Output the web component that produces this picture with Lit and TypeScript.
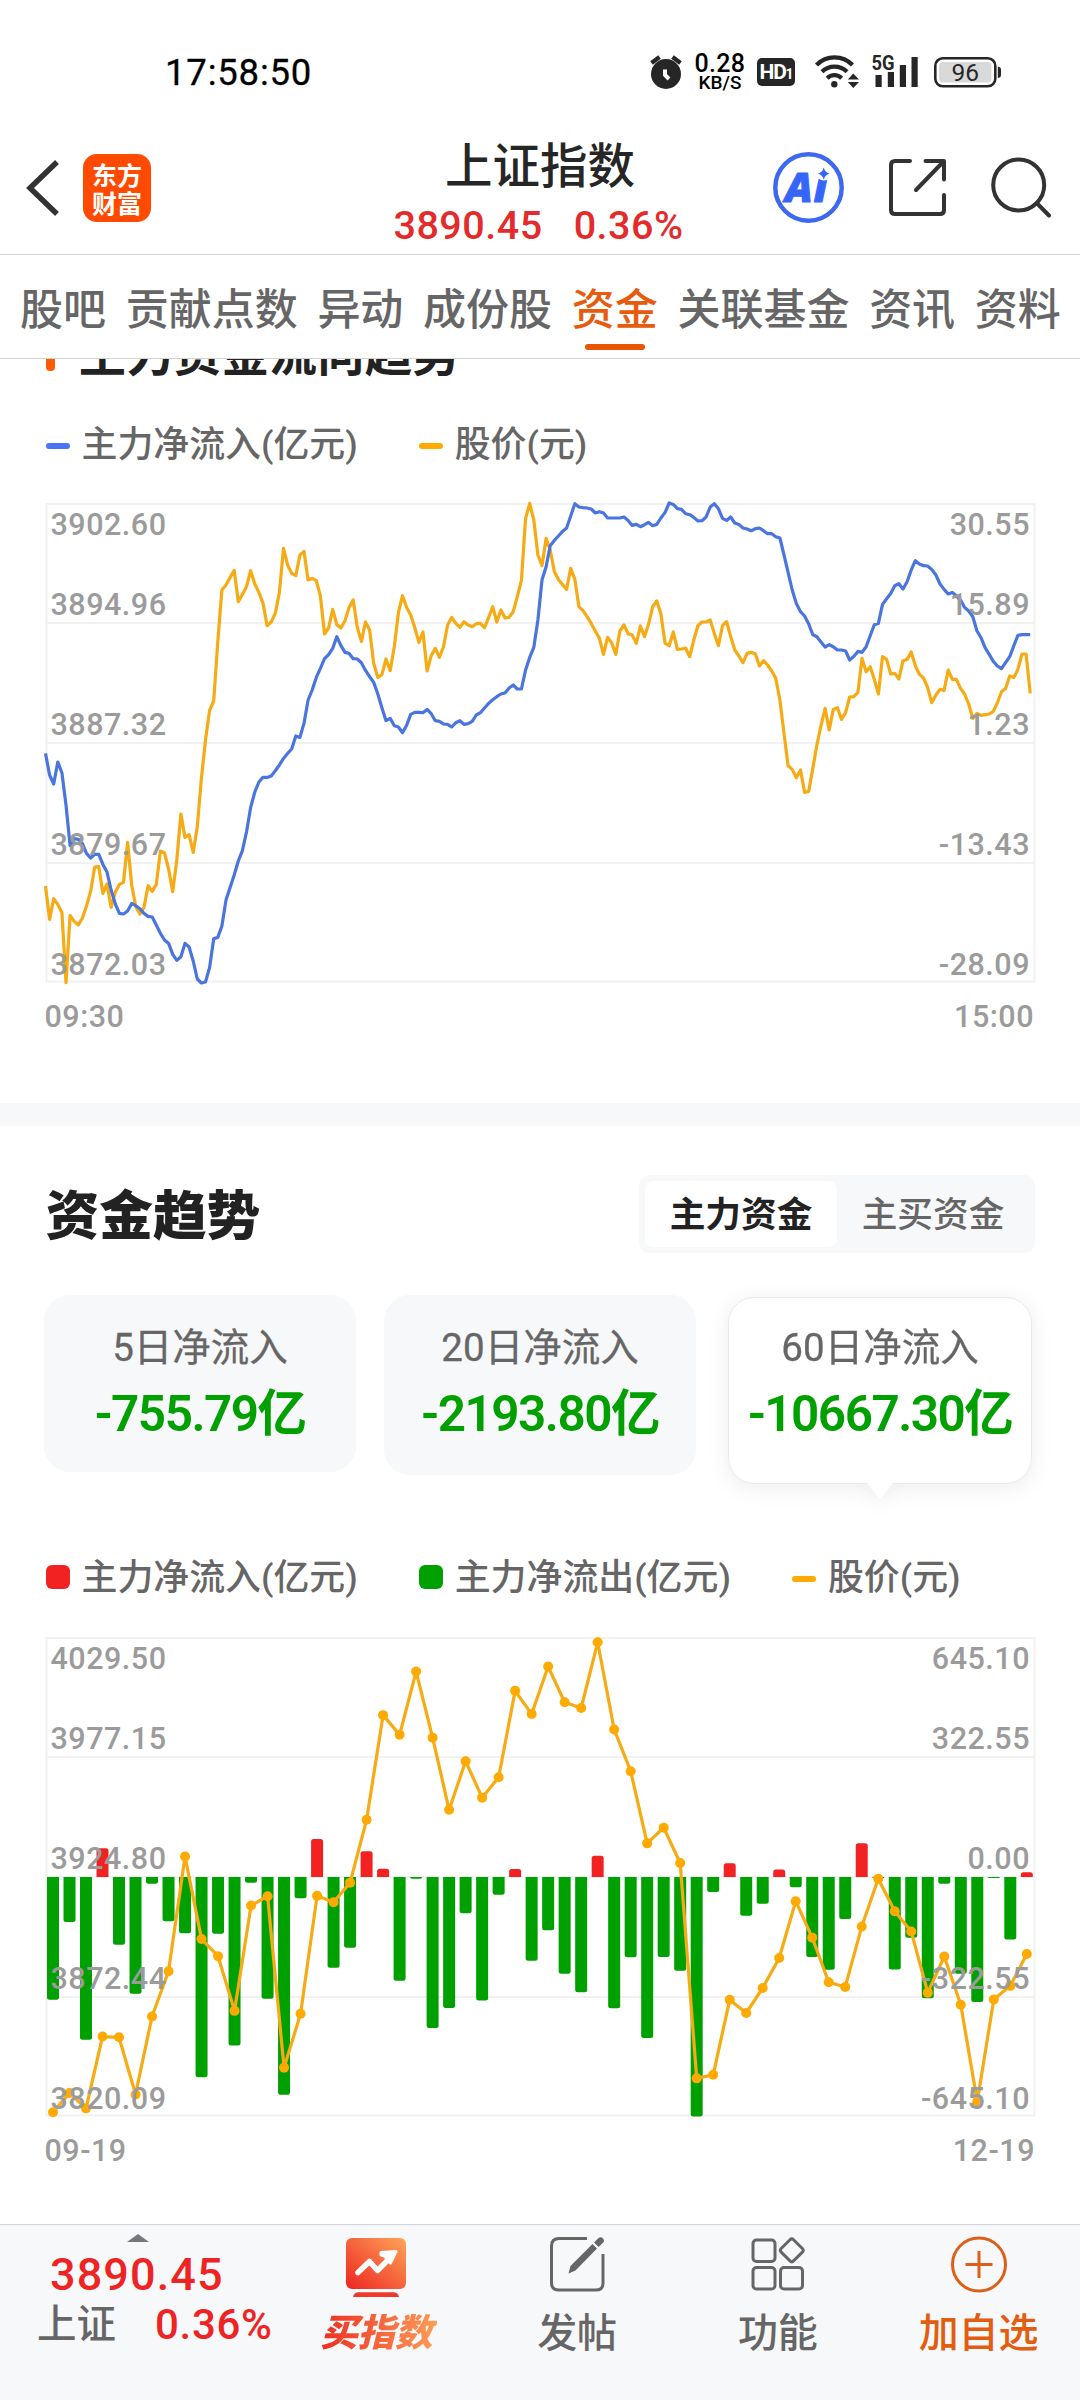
import { LitElement, html, svg, css } from "lit";
import { customElement, property } from "lit/decorators.js";
import { classMap } from "lit/directives/class-map.js";

/* One sample per trading minute, 09:30 to 15:00, in thirds of a pixel below the frame top. */
const PRICE = [
  1147, 1247, 1185, 1202, 1226, 1437, 1235, 1253, 1264, 1243, 1207, 1163, 1090, 1089, 1169, 1141, 1211, 1165, 1142, 1136,
  1016, 1144, 1209, 1231, 1211, 1146, 1163, 1142, 1042, 1048, 1096, 1164, 1069, 931, 1001, 993, 1046, 969, 824, 709,
  620, 592, 414, 259, 244, 221, 200, 294, 272, 249, 201, 241, 266, 299, 366, 355, 329, 266, 134, 184,
  209, 216, 154, 143, 229, 224, 231, 277, 391, 373, 317, 363, 373, 351, 311, 289, 371, 413, 355, 379,
  479, 521, 513, 466, 501, 429, 327, 276, 311, 334, 372, 416, 385, 502, 456, 434, 461, 429, 364, 341,
  359, 371, 354, 364, 369, 360, 359, 372, 342, 309, 355, 319, 343, 341, 324, 279, 231, 44, -1, 49,
  154, 186, 104, 139, 203, 227, 242, 257, 194, 226, 309, 321, 339, 359, 382, 404, 452, 401, 417, 452,
  382, 364, 390, 394, 419, 367, 399, 361, 309, 292, 331, 419, 426, 385, 437, 436, 433, 459, 409, 366,
  355, 355, 349, 389, 426, 366, 354, 399, 439, 457, 477, 449, 446, 450, 487, 471, 484, 502, 524, 589,
  689, 786, 797, 822, 799, 866, 863, 794, 724, 666, 614, 679, 617, 612, 647, 627, 580, 579, 566, 464,
  504, 489, 527, 571, 459, 467, 511, 509, 526, 471, 467, 445, 486, 512, 523, 551, 597, 574, 557, 560,
  499, 527, 527, 554, 571, 601, 644, 629, 635, 633, 631, 623, 597, 564, 554, 517, 521, 497, 451, 451, 569,
];
const INFLOW = [
  749, 814, 841, 775, 807, 904, 1026, 1005, 1007, 1020, 1049, 1063, 1052, 1052, 1082, 1105, 1159, 1201, 1229, 1231,
  1222, 1199, 1206, 1215, 1229, 1238, 1240, 1264, 1289, 1309, 1319, 1352, 1370, 1359, 1319, 1330, 1372, 1426, 1438, 1435,
  1391, 1305, 1301, 1267, 1189, 1151, 1114, 1072, 1041, 985, 912, 865, 835, 821, 821, 817, 801, 784, 764, 749,
  736, 697, 701, 659, 589, 559, 521, 494, 465, 453, 434, 399, 426, 446, 449, 465, 466, 477, 500, 519,
  536, 571, 612, 651, 644, 666, 670, 687, 665, 632, 626, 626, 627, 617, 630, 651, 653, 661, 662, 670,
  657, 651, 662, 660, 653, 634, 627, 613, 599, 588, 579, 571, 568, 553, 544, 556, 556, 499, 461, 431,
  349, 229, 189, 126, 110, 97, 83, 73, 37, 0, 10, 12, 13, 16, 28, 24, 28, 43, 43, 43,
  43, 40, 50, 65, 62, 69, 63, 56, 66, 62, 43, 26, -2, 2, 15, 17, 30, 33, 41, 52,
  51, 40, 10, 0, 15, 44, 50, 40, 58, 62, 73, 76, 81, 75, 73, 81, 90, 90, 99, 103,
  154, 206, 259, 299, 324, 337, 361, 393, 399, 415, 430, 423, 429, 439, 439, 442, 469, 458, 443, 446,
  429, 396, 363, 359, 302, 285, 269, 246, 240, 256, 234, 199, 171, 181, 186, 187, 197, 214, 241, 257,
  271, 266, 277, 289, 311, 322, 339, 381, 402, 432, 452, 473, 487, 495, 477, 459, 426, 395, 393, 393, 393,
];

/* Sixty trading days. Both series share one scale: 2.8 units to the pixel, frame top at 78, zero at 747. */
const DAY_PRICE = [
  1406, 1352, 1395, 1194, 1196, 1356, 1138, 1011, 690, 921, 969, 1122, 827, 801, 1281, 1130, 800, 818, 763, 587,
  294, 349, 172, 357, 559, 423, 525, 468, 226, 291, 158, 258, 274, 90, 334, 451, 653, 609, 708, 1311,
  1301, 1091, 1128, 1058, 974, 815, 917, 1042, 1055, 886, 752, 843, 900, 1071, 970, 1105, 1376, 1090, 1052, 963,
];
const DAY_FLOW = [
  1091, 873, 1203, 667, 937, 1074, 766, 871, 905, 1308, 906, 1219, 763, 1088, 1357, 807, 641, 1001, 945, 675,
  724, 1038, 752, 1170, 1114, 849, 1093, 797, 725, 982, 896, 1018, 1070, 688, 1115, 972, 1198, 971, 1010, 1418,
  789, 709, 856, 822, 726, 776, 971, 1007, 865, 653, 751, 1006, 917, 1087, 766, 1018, 1097, 750, 922, 734,
];

const FONT = css`
  :host {
    font-family: Roboto, "Noto Sans CJK SC", sans-serif;
  }
`;

const frame = (ys: number[]) => svg`
  <path class="grid" d="M0.500 1H988.500V478.5H0.500Z ${ys.map((y) => `M0.500 ${y}H988.500`).join(" ")}" />`;

const axis = (left: string[], right: string[], ys: number[]) => svg`
  ${left.map((t, i) => svg`<text class="axis" x="4.5" y=${ys[i]}>${t}</text>`)}
  ${right.map((t, i) => svg`<text class="axis end" x="984" y=${ys[i]}>${t}</text>`)}`;

const chartStyles = css`
  :host { display: block; }
  svg { display: block; width: 988px; height: 480px; overflow: visible; }
  .grid { fill: none; stroke: #f1f1f1; stroke-width: 2; }
  .line { fill: none; stroke-width: 3.2; stroke-linejoin: round; }
  .price { stroke: #f6aa14; }
  .flow { stroke: #4a75df; }
  .dot { fill: #ffaa00; }
  .up { fill: #f22222; }
  .down { fill: #00a000; }
  .axis { font-size: 30.5px; font-weight: 500; fill: #9b9b9b; letter-spacing: 0.5px; }
  .end { text-anchor: end; }
  .range {
    display: flex; justify-content: space-between; height: 40px; margin: 13.5px 0 0 -1px;
    font-size: 30.5px; font-weight: 500; line-height: 40px; letter-spacing: 0.5px; color: #9b9b9b;
  }
`;

@customElement("intraday-chart")
class IntradayChart extends LitElement {
  static styles = [FONT, chartStyles];

  private points(data: number[]) {
    return data.map((v, i) => `${(i * 4.103 - 0.5).toFixed(1)},${(v / 3 + 0.7).toFixed(1)}`).join(" ");
  }

  render() {
    return html`
      <svg viewBox="0 0 988 480">
        ${frame([120, 240, 360])}
        <polyline class="line price" points=${this.points(PRICE)} />
        <polyline class="line flow" points=${this.points(INFLOW)} />
        ${axis(
          ["3902.60", "3894.96", "3887.32", "3879.67", "3872.03"],
          ["30.55", "15.89", "1.23", "-13.43", "-28.09"],
          [32, 112, 232, 352, 472]
        )}
      </svg>
      <div class="range"><span>09:30</span><span>15:00</span></div>
    `;
  }
}

@customElement("daily-chart")
class DailyChart extends LitElement {
  static styles = [FONT, chartStyles];

  private y(v: number) {
    return (v - 78) / 2.8 + 1;
  }

  private bar(v: number, i: number) {
    const x = 7 + i * 16.505 - 6;
    const zero = this.y(747);
    const end = this.y(v);
    const r = Math.min(2.5, Math.abs(end - zero));
    const s = v > 747 ? -r : r;
    return svg`<path class=${v > 747 ? "down" : "up"}
      d="M${x} ${zero}V${end + s}Q${x} ${end} ${x + r} ${end}H${x + 12 - r}Q${x + 12} ${end} ${x + 12} ${end + s}V${zero}Z" />`;
  }

  render() {
    const pts = DAY_PRICE.map((v, i) => [7 + i * 16.505, this.y(v)]);
    return html`
      <svg viewBox="0 0 988 480">
        ${frame([120, 240, 360])}
        ${DAY_FLOW.map((v, i) => this.bar(v, i))}
        <polyline class="line price" points=${pts.map((p) => p.join(",")).join(" ")} />
        ${pts.map((p) => svg`<circle class="dot" cx=${p[0]} cy=${p[1]} r="5" />`)}
        ${axis(
          ["4029.50", "3977.15", "3924.80", "3872.44", "3820.09"],
          ["645.10", "322.55", "0.00", "-322.55", "-645.10"],
          [32, 112, 232, 352, 472]
        )}
      </svg>
      <div class="range"><span>09-19</span><span>12-19</span></div>
    `;
  }
}

@customElement("chart-legend")
class ChartLegend extends LitElement {
  @property({ attribute: false }) items: { kind: string; label: string }[] = [];

  static styles = [
    FONT,
    css`
      :host { display: flex; gap: 61px; height: 44px; }
      .item { display: flex; align-items: center; gap: 12px; font-size: 35.9px; line-height: 44px; color: #666; font-weight: 500; white-space: nowrap; }
      .mark { width: 24px; height: 6px; border-radius: 3px; margin-top: 1px; }
      .blue { background: #4a74f6; }
      .amber { background: #ffaa00; }
      .red, .green { height: 24px; border-radius: 6px; margin-top: -2px; }
      .red { background: #f22222; }
      .green { background: #00a000; }
    `,
  ];

  render() {
    return this.items.map(
      (it) => html`<div class="item"><span class="mark ${it.kind}"></span><span>${it.label}</span></div>`
    );
  }
}

@customElement("status-bar")
class StatusBar extends LitElement {
  static styles = [
    FONT,
    css`
      :host { display: flex; align-items: center; height: 110px; padding: 34px 79px 0 165px; box-sizing: border-box; }
      svg { display: block; fill: #262626; }
      .time { font-size: 36.5px; font-weight: 400; letter-spacing: 0.8px; color: #000; margin: 2px auto 0 0; line-height: 40px; -webkit-text-stroke: 0.3px #000; }
      .speed { display: flex; flex-direction: column; align-items: center; width: 52px; margin: 2px 11px 0 12px; color: #000; font-weight: 500; }
      .rate { font-size: 25px; line-height: 20px; letter-spacing: 0.3px; }
      .unit { font-size: 19px; line-height: 18px; }
      .hd { display: grid; place-items: center; width: 38px; height: 28px; border-radius: 5px; background: #262626; color: #fff; margin-right: 19px; }
      .hd span { font: 700 21px/28px Roboto, sans-serif; letter-spacing: -1.2px; }
      .hd small { font-size: 14px; }
      .signal { margin: 0 16px 0 12px; }
      .hand { fill: none; stroke: #fff; stroke-width: 4; }
      .stroke { fill: none; stroke: #262626; stroke-width: 4.2; }
      .level { fill: #d9d9d9; }
      .shell { fill: none; stroke: #262626; stroke-width: 2.6; }
      .net { font: 700 20px Roboto, sans-serif; }
      .pct { font: 400 24.5px Roboto, sans-serif; }
    `,
  ];

  render() {
    return html`
      <span class="time">17:58:50</span>
      <svg width="32" height="40" viewBox="0 0 32 40">
        <circle cx="16" cy="22" r="15" />
        <path class="stroke" d="M1.5 11 9.5 5M22.5 5 30.5 11" />
        <path class="hand" d="M15 17.5V23L19 27" />
      </svg>
      <div class="speed"><span class="rate">0.28</span><span class="unit">KB/S</span></div>
      <div class="hd"><span>HD<small>1</small></span></div>
      <svg width="45" height="40" viewBox="0 0 45 40">
        <path class="stroke" d="M2.5 13A25 25 0 0 1 38.5 13M8 19.8A17.5 17.5 0 0 1 33 19.8M13.2 26.2A10.2 10.2 0 0 1 27.6 26.2" />
        <circle cx="20.3" cy="32.2" r="3.2" />
        <path d="M39.3 21.5 45 27.5H33.8ZM39.3 36 33.8 30H45Z" />
      </svg>
      <svg class="signal" width="47" height="40" viewBox="0 0 47 40">
        <text class="net" x="0.5" y="18.3" textLength="23" lengthAdjust="spacingAndGlyphs">5G</text>
        <path d="M4.5 23h6.2v12h-6.2ZM16.8 20h6.2v15h-6.2ZM28.8 13h6.2v22h-6.2ZM40.5 5h6.2v30h-6.2Z" />
      </svg>
      <svg width="67" height="40" viewBox="0 0 67 40">
        <rect class="shell" x="1.3" y="6.3" width="60" height="28" rx="7.5" />
        <rect class="level" x="5" y="10" width="52.5" height="20.6" rx="4" />
        <path d="M63.8 14.5q3.2 .5 3.2 3v5.5q0 2.500-3.200 3Z" />
        <text class="pct" x="17.600" y="29.300">96</text>
      </svg>
    `;
  }
}

@customElement("index-header")
class IndexHeader extends LitElement {
  static styles = [
    FONT,
    css`
      :host { display: grid; grid-template-columns: 1fr auto 1fr; height: 145px; border-bottom: 1px solid #d4d4d4; box-sizing: border-box; }
      svg { display: block; fill: none; stroke: #333; stroke-width: 4; stroke-linecap: round; stroke-linejoin: round; }
      .left, .right { display: flex; align-items: center; padding-top: 11px; }
      .left { padding-left: 25px; gap: 22px; }
      .right { justify-content: flex-end; gap: 42.5px; padding-right: 29px; }
      .back { stroke-width: 5.5; stroke-linecap: butt; stroke-linejoin: miter; }
      .logo { display: flex; flex-direction: column; justify-content: center; width: 68px; height: 68px; border-radius: 14px; background: #ff4a00; color: #fff; font: 700 25px/28px "Noto Sans CJK SC", sans-serif; text-align: center; }
      .middle { display: flex; flex-direction: column; align-items: center; padding-top: 27px; }
      .title { font-size: 47.500px; line-height: 60px; font-weight: 500; color: #262626; }
      .quote { display: flex; gap: 31px; font-size: 39.500px; font-weight: 500; line-height: 50px; letter-spacing: 0.500px; color: #e32b2b; margin: 4px 3px 0 0; }
      .ring { stroke: #3d68f0; stroke-width: 4.500; }
      .ai { font: italic 900 41px "Noto Sans", sans-serif; fill: #3566fb; stroke: #3566fb; stroke-width: 1; }
      .mask { fill: #fff; stroke: none; }
      .spark { fill: #3566fb; stroke: none; }
    `,
  ];

  render() {
    return html`
      <div class="left">
        <svg class="back" width="36" height="56" viewBox="0 0 36 56"><path d="M32 2 5 28 32 54" /></svg>
        <div class="logo"><span>东方</span><span>财富</span></div>
      </div>
      <div class="middle">
        <div class="title">上证指数</div>
        <div class="quote"><span>3890.45</span><span>0.36%</span></div>
      </div>
      <div class="right">
        <svg width="71" height="71" viewBox="0 0 71 71">
          <circle class="ring" cx="35.5" cy="35.5" r="33.2" />
          <text class="ai" x="12" y="49.500" textLength="42">Ai</text>
          <circle class="mask" cx="51" cy="20.500" r="8" />
          <path class="spark" d="M50.700 15.500Q52 20.500 56.500 21.700 52 23 50.700 27.500 49.500 23 45 21.700 49.500 20.500 50.700 15.500Z" />
        </svg>
        <svg width="61" height="61" viewBox="0 0 61 61">
          <path d="M23 4H8Q4 4 4 8V53Q4 57 8 57H53Q57 57 57 53V38M38.500 4H57V22.500M56.500 4.500 29 33" />
        </svg>
        <svg width="61" height="61" viewBox="0 0 61 61">
          <circle cx="28.700" cy="28" r="25.500" /><path d="M46.700 46 59 58.500" />
        </svg>
      </div>
    `;
  }
}

@customElement("section-tabs")
class SectionTabs extends LitElement {
  static styles = [
    FONT,
    css`
      :host { display: flex; gap: 19.700px; height: 104px; padding: 0 20px; border-bottom: 1px solid #d4d4d4; box-sizing: border-box; }
      .tab { position: relative; font-size: 43px; line-height: 110px; height: 103px; color: #666; font-weight: 500; white-space: nowrap; }
      .on { color: #e85a0c; }
      .on::after { content: ""; position: absolute; left: 50%; bottom: 8px; width: 60px; height: 6px; margin-left: -30px; border-radius: 3px; background: #ea5504; }
    `,
  ];

  render() {
    return ["股吧", "贡献点数", "异动", "成份股", "资金", "关联基金", "资讯", "资料"].map(
      (t) => html`<span class=${classMap({ tab: true, on: t === "资金" })}>${t}</span>`
    );
  }
}

@customElement("action-bar")
class ActionBar extends LitElement {
  static styles = [
    FONT,
    css`
      :host { display: grid; grid-template-columns: 276px repeat(4, 1fr); height: 176px; background: #f7f8fa; border-top: 1px solid #cfd2d8; box-sizing: border-box; padding-right: 1px; }
      svg { display: block; fill: none; stroke: #666; stroke-width: 3; stroke-linejoin: round; }
      .quote { display: flex; flex-direction: column; color: #ee2424; }
      .caret { width: 0; border: 11px solid transparent; border-top: 0; border-bottom: 8px solid #77777c; margin: 9px 0 0 127px; }
      .last { font-size: 45px; font-weight: 500; line-height: 50px; letter-spacing: 1.100px; padding: 8px 0 0 50px; }
      .row { display: flex; gap: 39px; padding-left: 37px; font-size: 42px; font-weight: 500; line-height: 49px; letter-spacing: 0.700px; }
      .name { color: #666; font-size: 39.500px; font-weight: 500; letter-spacing: 0; }
      .action { display: flex; flex-direction: column; align-items: center; padding-top: 10px; font-size: 40px; font-weight: 500; line-height: 52px; color: #666; gap: 11px; white-space: nowrap; }
      .add { color: #e35d10; }
      .add svg { stroke: #dd5f18; }
      .buy { gap: 12px; }
      .buy span { font-size: 37.500px; font-weight: 900; font-style: italic; line-height: 48px; padding: 0 4px; background: linear-gradient(90deg, #ec2a22, #ff9c55); -webkit-background-clip: text; background-clip: text; color: transparent; }
      .nofill { stroke: none; }
      .trend { stroke: #fff; stroke-width: 5.500; stroke-linecap: round; }
      .head { fill: #fff; stroke: #fff; stroke-width: 3; }
      .pen { fill: #666; stroke: none; }
    `,
  ];

  render() {
    return html`
      <div class="quote">
        <i class="caret"></i>
        <span class="last">3890.45</span>
        <div class="row"><span class="name">上证</span><span>0.36%</span></div>
      </div>
      <div class="action buy">
        <svg width="62" height="62" viewBox="0 0 62 62">
          <defs><linearGradient id="g" x1="0" y1="1" x2="1" y2="0"><stop offset="0" stop-color="#ee2420" /><stop offset="1" stop-color="#ffa458" /></linearGradient></defs>
          <rect class="nofill" x="1" y="3" width="60" height="51" rx="6" fill="url(#g)" />
          <path class="nofill" d="M13 57.200H49Q54 58 54 63H8Q8 58 13 57.200Z" fill="#ee3a2a" />
          <path class="trend" d="M13 37.500 24.500 26.500 32.500 35.500 44 24" />
          <path class="head" d="M36 17.500 51 16.500 45.500 28 42 25Q41.500 21 36 20Z" />
        </svg>
        <span>买指数</span>
      </div>
      <div class="action">
        <svg width="58" height="62" viewBox="0 0 58 62">
          <path d="M39 3.500H11Q3.500 3.500 3.500 11V48Q3.500 55 11 55H48Q55 55 55 48V19" />
          <path class="pen" d="M20.500 38.500 22.500 31 44.500 9 49 13.500 27.500 35.500ZM46 7.500 50.500 3Q53 1.500 55 3.500T55.200 7.500L50.600 12Z" />
        </svg>
        <span>发帖</span>
      </div>
      <div class="action">
        <svg width="54" height="62" viewBox="0 0 54 62">
          <rect x="2" y="5" width="22" height="21.500" rx="3.500" />
          <rect x="2" y="32.500" width="22" height="21.500" rx="3.500" />
          <rect x="29.500" y="32.500" width="22" height="21.500" rx="3.500" />
          <rect x="32" y="6.500" width="17.500" height="17.500" rx="2.500" transform="rotate(45 40.700 15.300)" />
        </svg>
        <span>功能</span>
      </div>
      <div class="action add">
        <svg width="58" height="62" viewBox="0 0 58 62">
          <circle cx="29" cy="29.500" r="26.500" /><path d="M15.500 29.500H42.500M29 16V43" />
        </svg>
        <span>加自选</span>
      </div>
    `;
  }
}

@customElement("app-root")
class AppRoot extends LitElement {
  static styles = [
    FONT,
    css`
      :host { display: flex; flex-direction: column; width: 1080px; height: 2400px; background: #fff; overflow: hidden; }
      .scroll { flex: 1; min-height: 0; overflow: hidden; }
      .trend { padding: 0 46px 0 45.500px; height: 744px; overflow: hidden; box-sizing: border-box; }
      .heading { display: flex; align-items: center; gap: 24px; margin-top: -29px; height: 50px; font-size: 47.700px; line-height: 50px; font-weight: 700; color: #222; }
      .tick { width: 9px; height: 36px; border-radius: 4px; background: #ff5a00; margin-top: -4px; }
      .trend chart-legend { margin: 43px 0 36px; }
      .band { height: 23px; background: #f7f8fa; }
      .capital { padding: 49px 45px 0 45.500px; }
      .bar { display: flex; align-items: center; justify-content: space-between; height: 78px; }
      .big { font-size: 53.700px; line-height: 78px; font-weight: 900; color: #222; padding-top: 5px; }
      .switch { display: grid; grid-template-columns: 192px 1fr; width: 396px; height: 78px; padding: 6px; border-radius: 10px; background: #f7f8fa; box-sizing: border-box; font-size: 35.700px; line-height: 69px; text-align: center; color: #666; font-weight: 500; }
      .chosen { height: 66px; background: #fff; border-radius: 8px; color: #222; font-weight: 700; }
      .cards { display: grid; grid-template-columns: 312px 312px 304px; column-gap: 28px; margin: 42px 0 0 -1.500px; align-items: start; height: 205px; }
      .card { display: flex; flex-direction: column; align-items: center; height: 177px; border-radius: 26px; background: #f7f8fa; padding-top: 27px; box-sizing: border-box; white-space: nowrap; }
      .mid { height: 180px; }
      .active { position: relative; height: 187px; margin: 2px -4px 0 4px; padding-top: 24px; background: #fff; border: 1.500px solid #e9e9e9; filter: drop-shadow(0 4px 10px rgba(0, 0, 0, 0.07)); }
      .active::after { content: ""; position: absolute; left: 50%; bottom: -16px; width: 30px; height: 18px; margin-left: -15px; background: #fff; clip-path: polygon(0 0, 100% 0, 50% 100%); }
      .label { font-size: 38.500px; line-height: 52px; color: #666; -webkit-text-stroke: 0.300px #666; }
      .value { font-size: 49.500px; line-height: 66px; margin-top: 7px; letter-spacing: -1.500px; color: #00a000; font-weight: 600; }
      .capital chart-legend { margin: 56px 0 37px; }
    `,
  ];

  render() {
    return html`
      <status-bar></status-bar>
      <index-header></index-header>
      <section-tabs></section-tabs>
      <div class="scroll">
        <section class="trend">
          <div class="heading"><i class="tick"></i><span>主力资金流向趋势</span></div>
          <chart-legend .items=${[
            { kind: "blue", label: "主力净流入(亿元)" },
            { kind: "amber", label: "股价(元)" },
          ]}></chart-legend>
          <intraday-chart></intraday-chart>
        </section>
        <div class="band"></div>
        <section class="capital">
          <div class="bar">
            <span class="big">资金趋势</span>
            <div class="switch"><span class="chosen">主力资金</span><span>主买资金</span></div>
          </div>
          <div class="cards">
            <div class="card"><span class="label">5日净流入</span><span class="value">-755.79亿</span></div>
            <div class="card mid"><span class="label">20日净流入</span><span class="value">-2193.80亿</span></div>
            <div class="card active"><span class="label">60日净流入</span><span class="value">-10667.30亿</span></div>
          </div>
          <chart-legend .items=${[
            { kind: "red", label: "主力净流入(亿元)" },
            { kind: "green", label: "主力净流出(亿元)" },
            { kind: "amber", label: "股价(元)" },
          ]}></chart-legend>
          <daily-chart></daily-chart>
        </section>
      </div>
      <action-bar></action-bar>
    `;
  }
}
